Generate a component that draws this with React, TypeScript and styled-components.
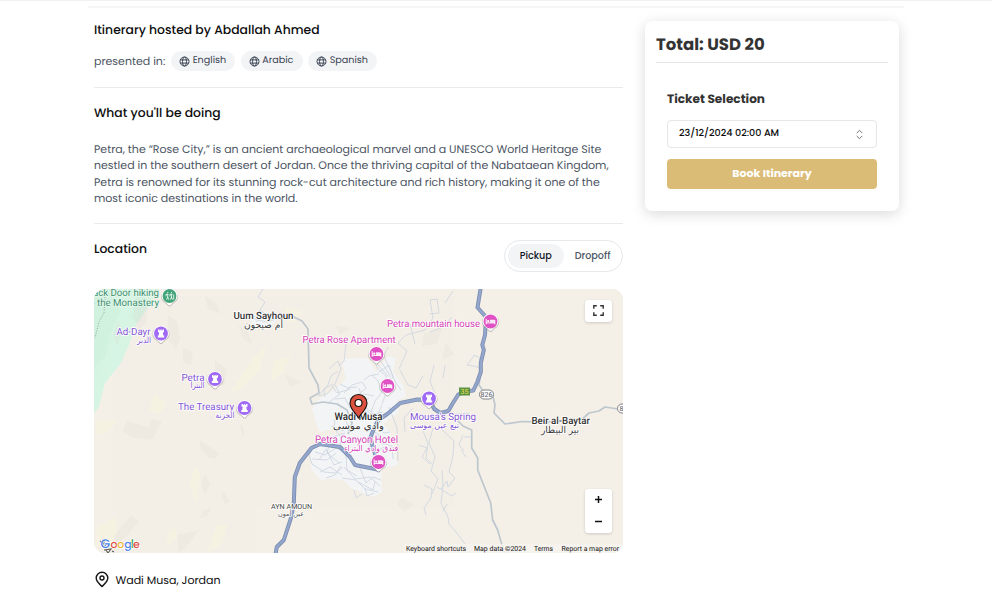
import React from 'react';
import styled, { createGlobalStyle } from 'styled-components';

const GlobalStyle = createGlobalStyle`
  * { box-sizing: border-box; }
  html, body { margin: 0; padding: 0; background: #fff; overflow: hidden; }
  body {
    font-family: Poppins, Inter, "Liberation Sans", sans-serif;
    color: #0c0c0d;
    text-rendering: geometricPrecision;
  }
  h2, h3, p { margin: 0; }
`;

const Page = styled.div`
  width: 992px;
  height: 593px;
  overflow: hidden;
  border-top: 1px solid #f1f1f2;
  padding: 5px 88px 0;
`;

const Content = styled.main`
  display: flex;
  align-items: flex-start;
  gap: 22px;
  border-top: 2px solid #f6f6f7;
  padding: 0 5px 0 6px;
`;

const Details = styled.div`
  width: 529px;
  flex: none;
  display: flex;
  flex-direction: column;
`;

const Section = styled.section<{ $height: number; $top: number }>`
  height: ${(p) => p.$height}px;
  padding-top: ${(p) => p.$top}px;
  border-bottom: 1px solid #e9eaec;
`;

const Heading = styled.h2`
  font-size: 12.375px;
  line-height: 20px;
  font-weight: 500;
  white-space: nowrap;
`;

const Languages = styled.div`
  display: flex;
  align-items: center;
  margin-top: 10px;
  height: 20px;
  gap: 5.5px;
`;

const Presented = styled.span`
  font-size: 11px;
  color: #4b5563;
  width: 71.5px;
  white-space: nowrap;
`;

const Pill = styled.span<{ $width: number }>`
  display: inline-flex;
  align-items: center;
  gap: 2.7px;
  width: ${(p) => p.$width}px;
  height: 19.5px;
  padding-left: 8px;
  border-radius: 10px;
  background: #f3f4f6;
  color: #374151;
  font-size: 9.625px;
  white-space: nowrap;
`;

const Paragraph = styled.p`
  margin-top: 16.5px;
  font-size: 11px;
  line-height: 16.5px;
  color: #4b5563;
`;

const Line = styled.span`
  display: block;
  white-space: nowrap;
`;

const LocationHeader = styled.div`
  display: flex;
  justify-content: space-between;
  align-items: flex-start;
  padding-top: 16px;
  height: 65px;
`;

const Toggle = styled.div`
  display: flex;
  width: 119px;
  height: 32px;
  padding: 3px;
  border: 1px solid #e7e8eb;
  border-radius: 16px;
`;

const ToggleOption = styled.button<{ $active?: boolean }>`
  flex: none;
  width: ${(p) => (p.$active ? 55.5 : 58)}px;
  border: 0;
  border-radius: 13px;
  padding: 0;
  background: ${(p) => (p.$active ? '#f3f4f6' : 'transparent')};
  color: ${(p) => (p.$active ? '#111827' : '#4b5563')};
  font: 500 9.625px Poppins, Inter, sans-serif;
`;

const MapFrame = styled.div`
  position: relative;
  height: 264px;
  border-radius: 11px;
  overflow: hidden;
  background: #f3efe8;
  svg { display: block; }
`;

const MapControl = styled.div<{ $top: number; $height: number }>`
  position: absolute;
  right: 11px;
  top: ${(p) => p.$top}px;
  width: 27px;
  height: ${(p) => p.$height}px;
  border-radius: 3px;
  background: #fff;
  box-shadow: 0 1px 3px rgba(0, 0, 0, 0.16);
  display: flex;
  flex-direction: column;
  align-items: center;
  justify-content: space-around;
`;

const Address = styled.div`
  display: flex;
  align-items: center;
  gap: 6.500px;
  height: 20px;
  margin-top: 17px;
  font-size: 11px;
  white-space: nowrap;
  svg { margin-top: -2px; }
`;

const Card = styled.aside`
  width: 254px;
  height: 190px;
  margin-top: 13px;
  padding: 11px 11px 0;
  border-radius: 7px;
  background: #fff;
  box-shadow: 0 3px 14px rgba(0, 0, 0, 0.15);
`;

const Total = styled.h2`
  height: 31px;
  border-bottom: 1px solid #e6e7e9;
  font-size: 16.5px;
  line-height: 25px;
  font-weight: 700;
  color: #333;
  white-space: nowrap;
`;

const Booking = styled.div`
  display: flex;
  flex-direction: column;
  padding: 27px 11px 0;
`;

const TicketTitle = styled.h3`
  font-size: 12.1px;
  line-height: 20px;
  font-weight: 700;
  color: #333;
  white-space: nowrap;
`;

const Select = styled.div`
  display: flex;
  align-items: center;
  justify-content: space-between;
  height: 28px;
  margin-top: 10px;
  padding: 0 12px 0 11px;
  border: 1px solid #e7e7ea;
  border-radius: 4px;
  font-size: 9.625px;
  font-weight: 500;
  white-space: nowrap;
`;

const BookButton = styled.button`
  height: 30.5px;
  margin-top: 10.5px;
  border: 0;
  border-radius: 4px;
  background: #dbbc77;
  color: #fff;
  font: 700 11px Poppins, Inter, sans-serif;
`;

function Globe() {
  return (
    <svg width="11" height="11" viewBox="0 0 11 11" fill="none" stroke="#374151" strokeWidth="0.95">
      <circle cx="5.5" cy="5.5" r="4.5" />
      <ellipse cx="5.5" cy="5.5" rx="2" ry="4.500" />
      <path d="M1.300 3.900h8.400M1.300 7.100h8.400" />
    </svg>
  );
}

type LabelProps = {
  x: number;
  y: number;
  w: number;
  size?: number;
  color: string;
  arabic?: boolean;
  weight?: number;
  halo?: string;
  children: string;
};

function Label({ x, y, w, size = 10, color, arabic, weight = 400, halo = '#fff', children }: LabelProps) {
  return (
    <text
      x={x + w / 2}
      y={y}
      textAnchor="middle"
      textLength={w}
      lengthAdjust="spacingAndGlyphs"
      fontSize={size}
      fontWeight={weight}
      fontFamily={arabic ? '"DejaVu Sans", sans-serif' : 'Roboto, sans-serif'}
      fill={color}
      stroke={halo}
      strokeWidth="1.600"
      strokeLinejoin="round"
      paintOrder="stroke"
    >
      {children}
    </text>
  );
}

type PinKind = 'hotel' | 'tower' | 'hike';
const pinColors: Record<PinKind, string> = { hotel: '#e052c3', tower: '#a06af5', hike: '#43a47a' };

function Pin({ x, y, kind }: { x: number; y: number; kind: PinKind }) {
  return (
    <g transform={`translate(${x} ${y})`}>
      <path d="M-8.500 .8a8.500 8.500 0 1 1 17 0c0 4.600-4.800 6.200-6.900 8.900q-1.600 1.800-3.200 0C-3.700 7-8.500 5.400-8.500 .8Z" fill="#8d8b87" opacity="0.5" />
      <path d="M-8 0a8 8 0 1 1 16 0c0 4.500-4.400 5.800-6.400 8.500q-1.600 1.800-3.200 0C-3.600 5.800-8 4.500-8 0Z" fill="#fff" />
      <circle r="6.900" fill={pinColors[kind]} />
      {kind === 'hotel' && (
        <>
          <path d="M-4.300-2.700v5.400M-4.300 1.400h8.600M4.300 2.700v-4" fill="none" stroke="#fff" strokeWidth="1" />
          <path d="M-.6-1.800h3.600q1.300 0 1.300 1.300v1.700H-.6z" fill="#fff" opacity=".85" />
          <circle cx="-2.300" cy="-.4" r="1.050" fill="#fff" />
        </>
      )}
      {kind === 'tower' && (
        <path d="M-3-4h1.500v1h.8v-1H.7v1h.8v-1H3v2.700H1.800l.5 3.200H3.200v2H-3.200v-2h.9l.5-3.200H-3Z" fill="#fff" />
      )}
      {kind === 'hike' && (
        <path d="M-1.800-4v1.200M2-4v1.200M-1.800-1.800v2.800l-1.200 2.700M-1.800 1l1 2.700M-3.500.3v-2h2.500M2-1.800v2.800L.8 3.700M2 1l1 2.700M.5.300v-2H3M4.200-1.500v5" fill="none" stroke="#fff" strokeWidth=".8" />
      )}
    </g>
  );
}

const terrain = [
  'M136 297l12 8-2 18-8 7-4-15zM118 320l5 12-6 13-4-11z',
  'M168 315l9 6 3 18-4 10-8-9zM205 296l12 8 3 10-12-5zM183 348l10 4-2 13-8-3z',
  'M215 360l12 10-3 17-9-12zM238 325l10 7 4 12-9-5z',
  'M127 421l21 6 4-8 10 2-10 19-19-2-10-7zM199 440l11 7 10 6-5 6-8-2-6-8z',
  'M205 474l5 10-5 11-4-11zM223 491l7 11-5 2-3-7zM203 511l8-4-3 9-8 2z',
  'M131 515l8 7-18 20-7 2 1-10zM177 535l22-5-12 16-8 7z',
  'M242 424l3 9-2 4-3-11zM285 374l17 8-12 5zM335 325l15 3-10 7z',
  'M402 497l12 8-10 6-7-7zM424 334l18-6-5 16-15 2zM446 342l8 12-12 6z',
];
const warm = [
  'M95 420l22 1-8 10-13 4zM155 394l12 8-8 13-10-5zM193 471q6-9 7 9l-4 22q-5-8-6-18z',
  'M97 527l18-10 3 15-14 18-8-6zM166 535l8-8 4 10-10 8zM217 525l10 0-5 19-15 8z',
  'M253 357l14-11-8 24-16 18-12 4zM287 306l16 6-10 11-11-7zM274 361l17-5-8 17-12 7z',
];

const lanes = [
  'M263 289l-5 8 7 5-5 8-3 6-12 3M260 310l12 9 8-1M252 318l14 4 14-4M256 322l8-7',
  'M346 344l-2 17-5 5M373 354l4 14 9 8 1 14-5 14M379 372l10-7 4 12-7 8M388 347l-4 9 12 27 5 7',
  'M364 380l5-4 10-2M372 375l6 6 4 11-7 9-4 11M382 405l-4 9 3 8M377 364l12 13M380 360l11 17',
  'M329 369l9-8 3 8-6 15-8 10-9 2M319 395l9-10 3-9 7-5M335 385l5 9-12 9M325 397l-1-8 9-5',
  'M344 393l8-8 10-3 4 6-8 7M349 399l15-5 10 2M351 405l6-8M335 399l10-1 5 10M340 384l8 4 9-1',
  'M315 445l-6 10 3 9 12 8 12 1 7-6M315 452l10 3 11-7 8 4M319 460l7-11 8 16 8-3M312 459l15 1 9-7',
  'M329 445l-2 8 12 10M320 472l10-5 12 8M326 478l9-3 6-9M340 447l1-10-7-8 1-10M331 426l13 5M332 437l13-4',
  'M346 455l1 15 10 6M344 467l11 12 15-2 10 9M342 478l14 2 9 9 13 3M360 468l6 15 7-6 8 3M358 482l15 8 2-9',
  'M354 490l2 8 6-4M365 488l2 8 7-3M374 458l8 8M372 430l7 5 1 8 12 3 1 13M376 426l8 7 6-1M389 407l8 21 1 33M369 446l9 4 9-4',
  'M350 389l-13 4-5-7M359 388l4 14 6-4M354 410l-9 9 3 7M356 414l11-3 8 6M362 405l12 9 9-2',
  'M399 369l8-18-9-8 8-8 19-5 8-12-3-18 7-1 2 14-9 1M410 324l5 20M400 370l8 15 8 3 7-12M445 303l8-12',
  'M473 355l6 2 2 11-8-2-6-1 7-9M430 332l13-5 9-10M434 365l-4 17 5 11M445 365l-2 13M450 415l19-2M405 432l-1-14 9-10',
  'M441 429l13 12-1 15-4 16 6 6-7 9-1-6-6 8M433 428l-4 15 6 14-4 14 7 8-6 15M423 431l5 12-2 15 6 6M424 485l8 4-1 9-7 10 2 7',
  'M437 487l15 9 4-3M442 470l1 16-2 17 7 14 1 7 7 8 9 12M447 504l-4 7M419 445l8 3-5 9 8 7M463 435l-4 10 5 6M461 450l5 7M464 437h7',
];

const roads = [
  'M280 318l12-2 10 5 6 8 1 39 9 17 1 8-9 5 2 6 11-2 14 2 10 6 5 13-4 11',
  'M457 420l6 6 8.700 4v18l6 10v12l13 33 2 17 5 10 4 14 3 9',
  'M481 371l-2 14 6 9 8 3 2 8-1 8 11 11 17-2.500 20 .5 38-1 9-8 10-2 6-4 13 2 5 0',
];

const highway = 'M481 286l-3.500 21.500 8.500 9.500-1 18-2.700 10 1.500 5-3 13v9l-3.500 10-4 8.500-8 1-7 3-6 9.500-4 7-8 2-6-4-5-9-12-.5-17 3.500-13 11-9 6-5 10-3 8 5 17';
const southHighway = 'M380 470l-10-2-15-3-5-8-10-10-20-3-8.500 4-11.700 15-5 14-1 26-2.500 14-7.500 23-7 7-1.500 8';

function MapDrawing() {
  return (
    <svg width="529" height="264" viewBox="94 289 529 264">
      <defs>
        <linearGradient id="forest" x1="0" x2="1" y1="0" y2=".3">
          <stop offset="0" stopColor="#d5f2df" />
          <stop offset=".45" stopColor="#d6f5e4" />
          <stop offset="1" stopColor="#dcf1df" />
        </linearGradient>
      </defs>
      <rect x="94" y="289" width="529" height="264" fill="#f4efe7" />
      <g fill="#f5f2e2">{warm.map((d) => <path key={d} d={d} />)}</g>
      <path d="M94 289h65l-11 19-11 15-8 22-8 18-16 20-6 24-5 6z" fill="url(#forest)" />
      <path d="M107 289l14 22-10 20-6 26-11 10V289zM139 292l10 9-10 22-9-5z" fill="#c4eed8" opacity=".3" />
      <g fill="#dedcd5" opacity=".28">{terrain.map((d) => <path key={d} d={d} />)}</g>
      <path d="M105 297l-1 16-5 9-4 16" fill="none" stroke="#8c9894" strokeWidth=".8" strokeDasharray="1 1.500" />
      <g fill="#f3f4f6">
        <path d="M343 359l25-1 8 14 12-16 8 2-3 14 10 13 3 12-9 3 2 12-16 12 8 9-8 17-39-3-3-20-21 5-4-9-4-14 7-10 15-9 12-11-3-14z" />
        <path d="M311 447l23-13 40 0 18 8 6 23-16 3-1 14 1 10-9 5-22-9-8-8-12-1-11 1-9-12z" />
        <path d="M250 315l15-4 15 6-10 9-18-1z" />
      </g>
      <g fill="none" stroke="#ccd6e0" strokeWidth=".85">{lanes.map((d) => <path key={d} d={d} />)}</g>
      <g fill="none" stroke="#bdc7ce" strokeWidth="1.700" strokeLinejoin="round">{roads.map((d) => <path key={d} d={d} />)}</g>
      <g fill="none" strokeLinejoin="round">
        <path d={highway} stroke="#7b8db0" strokeWidth="4" />
        <path d={southHighway} stroke="#7b8db0" strokeWidth="4" />
        <path d={highway} stroke="#94a6cb" strokeWidth="2.400" />
        <path d={southHighway} stroke="#94a6cb" strokeWidth="2.400" />
      </g>

      <rect x="459" y="387.500" width="11" height="8" fill="#5a9447" />
      <text x="464.500" y="394.200" textAnchor="middle" fontSize="7" fill="#f4df49" fontFamily="Roboto">35</text>
      <rect x="479.500" y="390" width="14" height="9" rx="4.500" fill="#fff" stroke="#73767a" strokeWidth=".9" />
      <text x="486.500" y="397.100" textAnchor="middle" fontSize="7" fill="#53565b" fontFamily="Roboto">826</text>
      <rect x="617.500" y="404" width="14" height="9" rx="4.500" fill="#fff" stroke="#73767a" strokeWidth=".9" />
      <text x="619.400" y="411" fontSize="7" fill="#53565b" fontFamily="Roboto">826</text>

      <Label x={87} y={296} w={72} color="#3d9270" halo="#eaf8ef">Back Door hiking</Label>
      <Label x={86} y={305.5} w={73} color="#3d9270" halo="#eaf8ef">to the Monastery</Label>
      <Label x={116.500} y={334.500} w={34} color="#8355d5">Ad-Dayr</Label>
      <Label x={137} y={343} w={14} size={8.5} color="#8355d5" arabic>الدير</Label>
      <Label x={181.500} y={380.5} w={23} color="#8355d5">Petra</Label>
      <Label x={190.500} y={388} w={14} size={8.5} color="#8355d5" arabic>البترا</Label>
      <Label x={178} y={409.5} w={56} color="#8355d5">The Treasury</Label>
      <Label x={215.500} y={417.500} w={19} size={8.5} color="#8355d5" arabic>الخزنة</Label>
      <Label x={233.500} y={318.5} w={60} color="#343434" weight={500}>Uum Sayhoun</Label>
      <Label x={244} y={327.500} w={39} size={9.5} color="#343434" arabic>أم صيحون</Label>
      <Label x={302.500} y={342.5} w={93} color="#d33fb5">Petra Rose Apartment</Label>
      <Label x={387} y={326.5} w={93} color="#d33fb5">Petra mountain house</Label>
      <Label x={334.500} y={419.500} w={48} size={10.5} color="#292929" weight={500}>Wadi Musa</Label>
      <Label x={333} y={429} w={51} size={9.5} color="#292929" arabic>وادي موسى</Label>
      <Label x={315} y={443} w={83} size={10.5} color="#d33fb5">Petra Canyon Hotel</Label>
      <Label x={344} y={450.5} w={54} size={8} color="#d33fb5" arabic>فندق وادي البتراء</Label>
      <Label x={410} y={420} w={66} color="#8355d5">Mousa&apos;s Spring</Label>
      <Label x={410} y={428} w={49} size={8} color="#8355d5" arabic>نبع عين موسى</Label>
      <Label x={531.500} y={423.500} w={58.500} color="#343434" weight={500}>Beir al-Baytar</Label>
      <Label x={541} y={433} w={38} size={9.5} color="#343434" arabic>بير البيطار</Label>
      <Label x={271} y={509} w={41} size={7} color="#444">AYN AMOUN</Label>
      <Label x={278} y={515.5} w={26} size={7} color="#555" arabic>عين أمون</Label>

      <Pin x={169.500} y={296} kind="hike" />
      <Pin x={161} y={333.500} kind="tower" />
      <Pin x={215} y={379} kind="tower" />
      <Pin x={244.500} y={408} kind="tower" />
      <Pin x={429} y={398.500} kind="tower" />
      <Pin x={490.500} y={321.500} kind="hotel" />
      <Pin x={376.500} y={354} kind="hotel" />
      <Pin x={387.500} y={386} kind="hotel" />
      <Pin x={378.500} y={462} kind="hotel" />
      <path d="M358.500 418.500c-1-5-8.500-8-8.500-15.500a8.500 8.500 0 0 1 17 0c0 7.500-7.500 10.500-8.500 15.500z" fill="#dc5140" stroke="#17130f" strokeWidth="1.100" />
      <circle cx="358.500" cy="403" r="3.500" fill="#fff" stroke="#17130f" strokeWidth="1.200" />

      <path d="M100 541l5 4-2-6M104 550l7-1-3 4-2-3M112 551l2 1" fill="none" stroke="#5c5c5c" strokeWidth="1.100" />
      <text y="548" fontSize="12.500" fontWeight="500" fontFamily="Poppins, Inter, sans-serif" stroke="#fff" strokeWidth="1.400" paintOrder="stroke">
        <tspan x="100.500" fill="#4f83e8">G</tspan>
        <tspan x="110.500" fontSize="11" fill="#df5145">o</tspan>
        <tspan x="117.300" fontSize="11" fill="#edb431">o</tspan>
        <tspan x="124.200" fontSize="11" fill="#4f83e8">g</tspan>
        <tspan x="130.800" fontSize="12" fill="#48a562">l</tspan>
        <tspan x="132.900" fontSize="11" fill="#df5145">e</tspan>
      </text>
      <rect x="404" y="544" width="219" height="9" fill="#f6f4f0" opacity=".8" />
      <Label x={406} y={551} w={60} size={7} color="#111" halo="none">Keyboard shortcuts</Label>
      <Label x={474} y={551} w={52} size={7} color="#111" halo="none">Map data ©2024</Label>
      <Label x={534} y={551} w={19} size={7} color="#111" halo="none">Terms</Label>
      <Label x={561.500} y={551} w={57.500} size={7} color="#111" halo="none">Report a map error</Label>
    </svg>
  );
}

const languages = [
  { name: 'English', width: 64 },
  { name: 'Arabic', width: 62 },
  { name: 'Spanish', width: 69 },
];

export default function App() {
  return (
    <>
      <GlobalStyle />
      <Page>
        <Content>
          <Details>
            <Section $height={80} $top={13}>
              <Heading>Itinerary hosted by Abdallah Ahmed</Heading>
              <Languages>
                <Presented>presented in:</Presented>
                {languages.map((l) => (
                  <Pill key={l.name} $width={l.width}>
                    <Globe />
                    {l.name}
                  </Pill>
                ))}
              </Languages>
            </Section>
            <Section $height={136} $top={16}>
              <Heading>What you&apos;ll be doing</Heading>
              <Paragraph>
                <Line>Petra, the “Rose City,” is an ancient archaeological marvel and a UNESCO World Heritage Site</Line>
                <Line>nestled in the southern desert of Jordan. Once the thriving capital of the Nabataean Kingdom,</Line>
                <Line>Petra is renowned for its stunning rock-cut architecture and rich history, making it one of the</Line>
                <Line>most iconic destinations in the world.</Line>
              </Paragraph>
            </Section>
            <LocationHeader>
              <Heading>Location</Heading>
              <Toggle>
                <ToggleOption $active>Pickup</ToggleOption>
                <ToggleOption>Dropoff</ToggleOption>
              </Toggle>
            </LocationHeader>
            <MapFrame>
              <MapDrawing />
              <MapControl $top={10.500} $height={22}>
                <svg width="11" height="11" viewBox="0 0 11 11" fill="none" stroke="#333" strokeWidth="1.400">
                  <path d="M.8 3.800v-3h3M7.200.8h3v3M10.200 7.200v3h-3M3.800 10.200h-3v-3" />
                </svg>
              </MapControl>
              <MapControl $top={199.500} $height={44}>
                <svg width="9" height="9" viewBox="0 0 9 9" stroke="#111" strokeWidth="1.500">
                  <path d="M1 4.500h7M4.500 1v7" />
                </svg>
                <svg width="9" height="9" viewBox="0 0 9 9" stroke="#111" strokeWidth="1.500">
                  <path d="M1 4.500h7" />
                </svg>
              </MapControl>
            </MapFrame>
            <Address>
              <svg width="15" height="17" viewBox="0 0 15 17" fill="none" stroke="#171717" strokeWidth="1.400" strokeLinejoin="round">
                <path d="M8 15.500C6 13.500 2.200 10.800 2.200 7.100a5.800 5.800 0 0 1 11.600 0c0 3.700-3.800 6.400-5.800 8.400z" />
                <circle cx="8" cy="7" r="2" />
              </svg>
              Wadi Musa, Jordan
            </Address>
          </Details>
          <Card>
            <Total>Total: USD 20</Total>
            <Booking>
              <TicketTitle>Ticket Selection</TicketTitle>
              <Select>
                23/12/2024 02:00 AM
                <svg width="9" height="11" viewBox="0 0 9 11" fill="none" stroke="#666" strokeWidth=".9" strokeLinecap="round" strokeLinejoin="round">
                  <path d="M2 3.800l2.500-2.500L7 3.800M2 7.200l2.500 2.500L7 7.200" />
                </svg>
              </Select>
              <BookButton>Book Itinerary</BookButton>
            </Booking>
          </Card>
        </Content>
      </Page>
    </>
  );
}
